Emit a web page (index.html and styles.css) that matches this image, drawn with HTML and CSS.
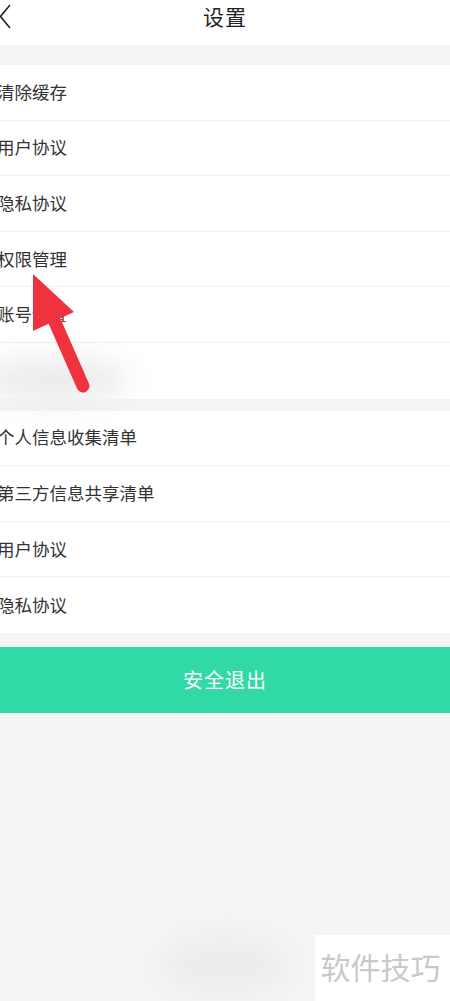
FILE: index.html
```html
<!DOCTYPE html>
<html lang="zh">
<head>
<meta charset="utf-8">
<link rel="stylesheet" href="styles.css">
</head>
<body>
<div class="page">
  <header class="topbar">
    <svg class="back" width="14" height="30" viewBox="0 0 14 30"><path d="M11 4 L1.5 15.5 L11 27" fill="none" stroke="#222" stroke-width="1.6"/></svg>
    <h1 class="title">设置</h1>
  </header>
  <div class="gap g1"></div>
  <section class="group">
    <div class="row"><span class="label">清除缓存</span></div>
    <div class="row"><span class="label">用户协议</span></div>
    <div class="row"><span class="label">隐私协议</span></div>
    <div class="row"><span class="label">权限管理</span></div>
    <div class="row"><span class="label">账号设置</span></div>
    <div class="row blank"></div>
  </section>
  <div class="gap g2"></div>
  <section class="group">
    <div class="row"><span class="label">个人信息收集清单</span></div>
    <div class="row"><span class="label">第三方信息共享清单</span></div>
    <div class="row"><span class="label">用户协议</span></div>
    <div class="row last"><span class="label">隐私协议</span></div>
  </section>
  <div class="gap g3"></div>
  <button class="logout">安全退出</button>
  <div class="rest"></div>

  <div class="smudge s1"></div>
  <div class="smudge s2"></div>
  <div class="cover"></div>
  <svg class="arrow" width="100" height="140" viewBox="0 0 100 140">
    <polygon points="33,14 33,71 74,52" fill="#f0323e"/>
    <line x1="54" y1="60" x2="83" y2="126" stroke="#f0323e" stroke-width="13" stroke-linecap="round"/>
  </svg>
  <div class="watermark">软件技巧</div>
</div>
</body>
</html>
```

FILE: styles.css
```css
* { box-sizing: border-box; margin: 0; padding: 0; }
html, body { width: 450px; height: 1001px; overflow: hidden; background: #f5f5f5; }
body { font-family: "Noto Sans CJK SC", "Noto Sans", sans-serif; color: #333; }
.page { position: relative; width: 450px; height: 1001px; display: flex; flex-direction: column; }
.topbar { height: 45px; background: #fff; display: flex; align-items: center; justify-content: center; position: relative; }
.back { position: absolute; left: -1px; top: 1px; }
.title { font-size: 21px; font-weight: 400; color: #222; margin-top: -13px; letter-spacing: 1px; }
.gap { background: #f5f5f5; }
.g1 { height: 20px; }
.g2 { height: 12px; }
.g3 { height: 14px; }
.group { background: #fff; }
.row { height: 55.6px; display: flex; align-items: center; border-bottom: 1px solid #f0f0f0; }
.row.last, .row.blank { border-bottom: none; }
.label { font-size: 17.5px; margin-left: -3px; color: #333; margin-top: -2px; }
.logout { height: 66px; width: 100%; border: none; background: #30d9a6; color: #fff; font-family: inherit; font-size: 20px; letter-spacing: 1px; }
.rest { flex: 1; background: #f5f5f5; }
.smudge { position: absolute; border-radius: 50%; filter: blur(14px); }
.s1 { left: -20px; top: 358px; width: 150px; height: 44px; background: #ebebeb; }
.s2 { left: 160px; top: 935px; width: 130px; height: 60px; background: #ececec; }
.cover { position: absolute; left: 67px; top: 300px; width: 34px; height: 30px; background: #fff; filter: blur(3px); }
.arrow { position: absolute; left: 0; top: 260px; }
.watermark { position: absolute; right: 0; top: 935px; width: 135px; height: 66px; background: #fff; color: #c9c9c9; font-size: 30px; display: flex; align-items: center; justify-content: center; padding-right: 4px; padding-bottom: 4px; }
```
